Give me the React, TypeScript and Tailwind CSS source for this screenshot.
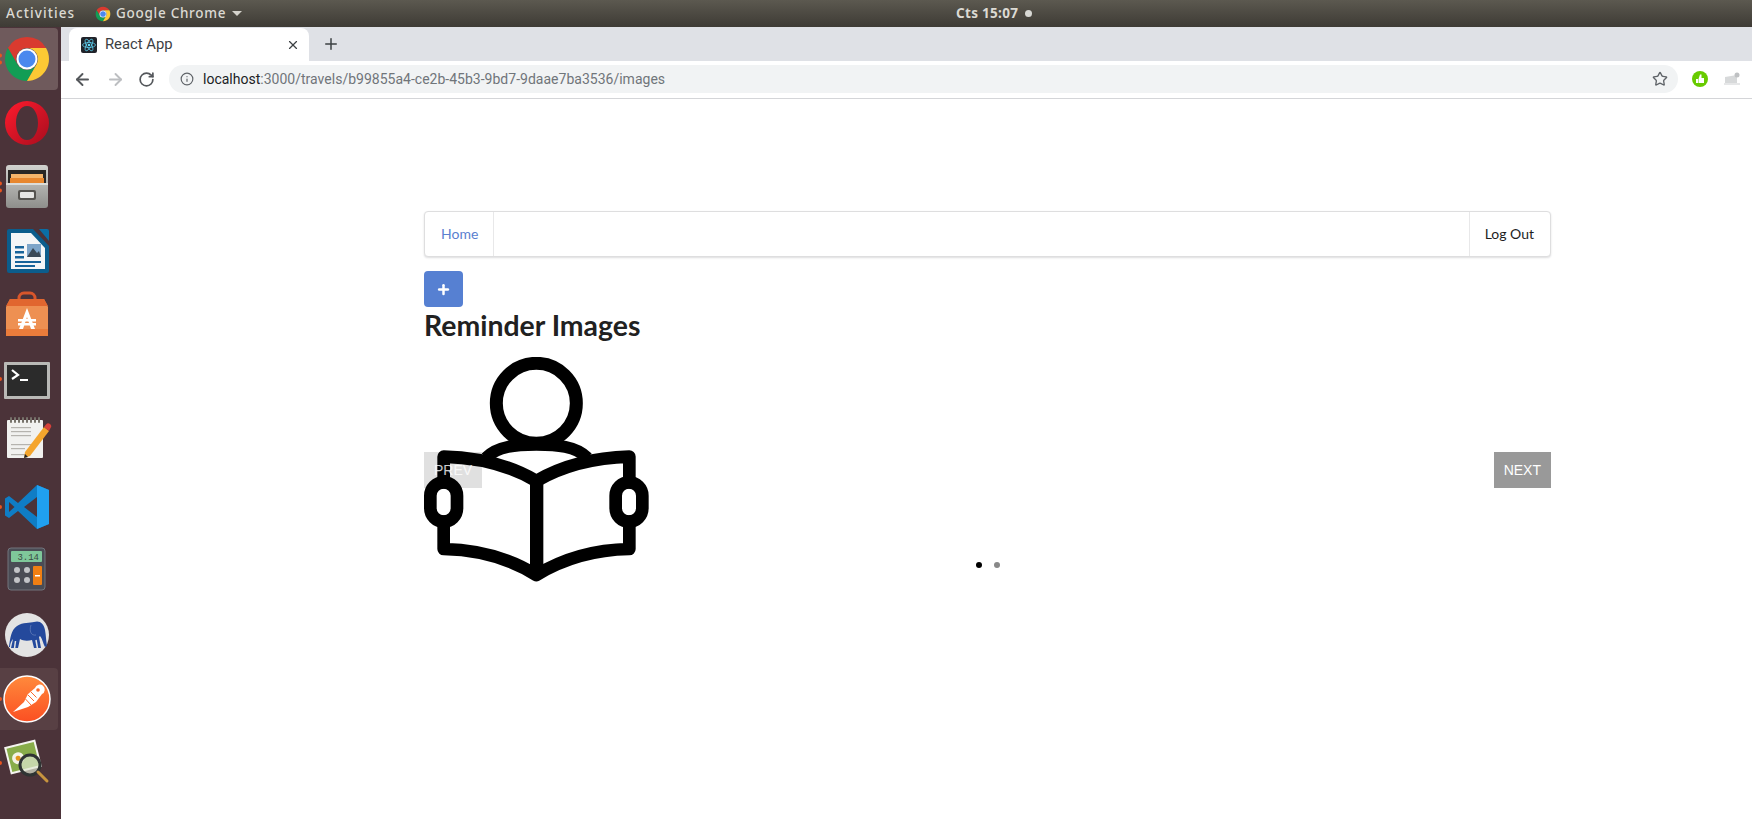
import { ArrowLeft, ArrowRight, RotateCw, Info, Star, X, Plus } from 'lucide-react';
import type { ReactNode } from 'react';

const ChromeIcon = ({ size = 48 }: { size?: number }) => (
  <svg width={size} height={size} viewBox="0 0 48 48">
    <path d="M24 2A22 22 0 0 0 4.95 13L14.5 29.5A11 11 0 0 1 24 13H43.05A22 22 0 0 0 24 2Z" fill="#d93a2f" />
    <path d="M4.95 13A22 22 0 0 0 24 46L33.5 29.5A11 11 0 0 1 14.5 29.5Z" fill="#129d55" />
    <path d="M43.05 13H24A11 11 0 0 1 33.5 29.5L24 46A22 22 0 0 0 43.05 13Z" fill="#fcc934" />
    <circle cx="24" cy="24" r="10.5" fill="#fff" />
    <circle cx="24" cy="24" r="8.5" fill="#4a88ee" />
  </svg>
);

const OperaIcon = () => (
  <svg width="48" height="48" viewBox="0 0 48 48">
    <defs>
      <linearGradient id="operaRed" x1="0" y1="0" x2="1" y2="1">
        <stop offset="0" stopColor="#ff1b2d" />
        <stop offset="1" stopColor="#a70d1e" />
      </linearGradient>
    </defs>
    <path fillRule="evenodd" d="M24 2a22 22 0 1 0 0 44a22 22 0 1 0 0-44ZM24 7c6.500 0 11 7.500 11 17S30.500 41 24 41s-11-7.500-11-17S17.500 7 24 7Z" fill="url(#operaRed)" />
  </svg>
);

const FilesIcon = () => (
  <svg width="48" height="48" viewBox="0 0 48 48">
    <defs>
      <linearGradient id="cabinet" x1="0" y1="0" x2="0" y2="1">
        <stop offset="0" stopColor="#d2d2cf" />
        <stop offset="1" stopColor="#8e8e8b" />
      </linearGradient>
    </defs>
    <rect x="3" y="2" width="42" height="43" rx="3" fill="url(#cabinet)" />
    <rect x="5" y="7" width="38" height="14" fill="#2a2725" />
    <rect x="8" y="11" width="32" height="4" fill="#f5b56b" />
    <rect x="7" y="15" width="34" height="5" fill="#e8872e" />
    <rect x="3" y="20" width="42" height="2" fill="#dcdcd9" />
    <rect x="15" y="27" width="18" height="10" rx="2" fill="#55534f" />
    <rect x="17" y="29" width="14" height="6" rx="1" fill="#e6e6e4" />
  </svg>
);

const WriterIcon = () => (
  <svg width="48" height="48" viewBox="0 0 48 48">
    <path d="M36 2H44a2 2 0 0 1 2 2V14Z" fill="#0a6ea5" />
    <path d="M6 2H30L46 19V44a2 2 0 0 1-2 2H6a2 2 0 0 1-2-2V4a2 2 0 0 1 2-2Z" fill="#0b5d8c" />
    <path d="M8 6H28L42 21V42H8Z" fill="#f4f6f7" />
    <rect x="12" y="19" width="9" height="2.500" fill="#18649a" />
    <rect x="12" y="24" width="9" height="2.500" fill="#18649a" />
    <rect x="12" y="29" width="9" height="2.500" fill="#18649a" />
    <rect x="24" y="17" width="14" height="13" fill="#7da5c9" />
    <path d="M24 30L30 21L34 26L36 24L38 30Z" fill="#3b4a57" />
    <rect x="12" y="34" width="26" height="2" fill="#18649a" />
    <rect x="12" y="38" width="20" height="2" fill="#18649a" />
  </svg>
);

const SoftwareIcon = () => (
  <svg width="48" height="48" viewBox="0 0 48 48">
    <path d="M16 12V7a5 5 0 0 1 5-5h6a5 5 0 0 1 5 5v5" fill="none" stroke="#d8562b" strokeWidth="3" />
    <path d="M7 8H41L45 16V45H3V16Z" fill="#ee9052" />
    <path d="M3 15L7 8H41L45 15Z" fill="#e1662f" />
    <rect x="3" y="38" width="42" height="7" fill="#ea7c3b" />
    <path d="M24 17L32 38H28L24 26L20 38H16Z" fill="#fff" />
    <rect x="15" y="28" width="18" height="2.500" fill="#fff" />
    <rect x="15" y="32" width="18" height="2.500" fill="#fff" />
  </svg>
);

const TerminalIcon = () => (
  <svg width="48" height="48" viewBox="0 0 48 48">
    <rect x="1" y="7" width="46" height="37" rx="1" fill="#b9b9b6" />
    <rect x="4" y="10" width="40" height="31" fill="#2b2b2b" />
    <path d="M9 15L15 20L9 24" fill="none" stroke="#fff" strokeWidth="2.200" />
    <rect x="17" y="24" width="8" height="2" fill="#fff" />
  </svg>
);

const NotepadIcon = () => (
  <svg width="48" height="48" viewBox="0 0 48 48" overflow="visible">
    <g transform="translate(0 -3)">
      <rect x="4" y="4" width="36" height="38" rx="1" fill="#f1f1ef" />
      {[7, 11, 15, 19, 23, 27, 31, 35].map((x) => (
        <rect key={x} x={x} y="1" width="2" height="6" rx="1" fill="#77736b" />
      ))}
      {[11, 15, 19, 28, 32, 38].map((y) => (
        <rect key={y} x="8" y={y} width={y > 30 ? 14 : 20} height="1.200" fill="#b5b3ae" />
      ))}
      <path d="M22 36L41 11L46 15L27 40L21 42Z" fill="#f4a52d" />
      <path d="M41 11L43 8.500A2.500 2.500 0 0 1 47.500 12L46 15Z" fill="#d6413a" />
      <path d="M22 38L21 42L25 41Z" fill="#222" />
    </g>
  </svg>
);

const VscodeIcon = () => (
  <svg width="48" height="48" viewBox="0 0 48 48">
    <path d="M34 2L15 20L6 13L2 15.500V32.500L6 35L15 28L34 46L46 41V7Z" fill="#0f7dc5" />
    <path d="M34 2L46 7V41L34 46Z" fill="#20a0f0" />
    <path d="M34 14L21 24L34 34Z" fill="#4b3339" />
    <path d="M6 19L11.500 24L6 29Z" fill="#4b3339" />
  </svg>
);

const CalcIcon = () => (
  <svg width="48" height="48" viewBox="0 0 48 48">
    <rect x="5" y="1" width="37" height="42" rx="3" fill="#4a4c55" stroke="#72747c" />
    <rect x="8" y="4" width="31" height="11" rx="1" fill="#7fc79a" />
    <text x="36" y="13" textAnchor="end" fontSize="9" fontFamily="Liberation Mono, monospace" fill="#3b4a44">3.14</text>
    <circle cx="14" cy="23" r="3" fill="#c2c3c7" />
    <circle cx="24" cy="23" r="3" fill="#c2c3c7" />
    <circle cx="14" cy="33" r="3" fill="#c2c3c7" />
    <circle cx="24" cy="33" r="3" fill="#c2c3c7" />
    <rect x="30" y="19" width="9" height="19" rx="1" fill="#f07f13" />
    <rect x="32" y="28" width="5" height="1.500" fill="#fff" />
  </svg>
);

const ElephantIcon = () => (
  <svg width="48" height="48" viewBox="0 0 48 48">
    <circle cx="24" cy="24" r="22" fill="#e3e3e3" />
    <path d="M6 36C7 28 8 19 14 15C20 11 27 12 31 11C36 9 41 12 42 19C43 24 43 30 44 35L42 36C40 32 39 27 37 25L36 26L38 37H31L29 29C25 30 20 30 17 28L15 37H8L10 28C8 30 7 33 7 36Z" fill="#24499c" />
    <path d="M11.500 37.500L12.500 30M34.500 37.500L33 29" stroke="#e3e3e3" strokeWidth="1.500" fill="none" />
    <path d="M28 14C26 20 28 25 33 24" stroke="#5f7bb8" strokeWidth="0.800" fill="none" />
  </svg>
);

const PostmanIcon = () => (
  <svg width="50" height="50" viewBox="0 0 50 50">
    <defs>
      <linearGradient id="postmanOrange" x1="0" y1="0" x2="0" y2="1">
        <stop offset="0" stopColor="#ff8a3c" />
        <stop offset="1" stopColor="#fb4f22" />
      </linearGradient>
    </defs>
    <circle cx="25" cy="25" r="23" fill="url(#postmanOrange)" stroke="#fff" strokeWidth="1.500" />
    <path d="M11 38L22 28L26 20L33 14A5 5 0 1 1 40 20L34 28L26 33Z" fill="#fff" />
    <path d="M23.500 25L29 31M26 21L32 27M29 18L34.500 23.500" stroke="#fb6a2d" strokeWidth="1" />
    <circle cx="36" cy="16" r="1.800" fill="#fb6a2d" />
  </svg>
);

const ViewerIcon = () => (
  <svg width="48" height="48" viewBox="0 0 48 48">
    <g transform="rotate(-14 20 18)">
      <rect x="4" y="4" width="32" height="28" fill="#f4f4ef" />
      <rect x="6" y="6" width="28" height="24" fill="#88ad4a" />
      <circle cx="15" cy="18" r="6" fill="#f3f3e6" />
      <circle cx="15" cy="18" r="2.500" fill="#e2941c" />
    </g>
    <circle cx="27" cy="26" r="10" fill="#dfe8d2" fillOpacity="0.700" stroke="#2f3433" strokeWidth="3" />
    <path d="M35 33L44 42" stroke="#c7943e" strokeWidth="3" strokeLinecap="round" />
  </svg>
);

const dockItems: { icon: ReactNode; pips: number; active?: boolean; hover?: boolean }[] = [
  { icon: <ChromeIcon />, pips: 2, active: true },
  { icon: <OperaIcon />, pips: 0 },
  { icon: <FilesIcon />, pips: 2 },
  { icon: <WriterIcon />, pips: 0 },
  { icon: <SoftwareIcon />, pips: 0 },
  { icon: <TerminalIcon />, pips: 1 },
  { icon: <NotepadIcon />, pips: 0 },
  { icon: <VscodeIcon />, pips: 1 },
  { icon: <CalcIcon />, pips: 0 },
  { icon: <ElephantIcon />, pips: 0 },
  { icon: <PostmanIcon />, pips: 1, hover: true },
  { icon: <ViewerIcon />, pips: 1 },
];

const Dock = () => (
  <div className="w-[61px] shrink-0 bg-[#4b3339] flex flex-col">
    {dockItems.map((item, index) => (
      <div key={index} className="h-16 w-[58px] py-px">
        <div
          className={`relative h-full rounded-r flex items-center justify-center pr-1 ${
            item.active ? 'bg-[#6f5a5c]' : item.hover ? 'bg-[#584044]' : ''
          }`}
        >
          {item.icon}
          {item.pips > 0 && (
            <div className="absolute left-0 top-1/2 -translate-y-1/2 flex flex-col gap-[3px]">
              {Array.from({ length: item.pips }).map((_, i) => (
                <span key={i} className="block h-[4px] w-[2px] rounded-r-full bg-[#e9541f]" />
              ))}
            </div>
          )}
        </div>
      </div>
    ))}
  </div>
);

const TopBar = () => (
  <div className="h-[27px] shrink-0 flex items-center bg-gradient-to-b from-[#5c5950] to-[#3e3b35] text-[#dcdad3] text-[13.5px] font-medium font-['Noto_Sans',sans-serif] relative">
    <span className="ml-[6px] w-[89px] tracking-[1.1px]">Activities</span>
    <ChromeIcon size={16} />
    <span className="ml-[5px] tracking-[0.72px]">Google Chrome</span>
    <span className="ml-[6px] w-0 h-0 border-x-[5px] border-x-transparent border-t-[5px] border-t-[#d5d3cc]" />
    <div className="absolute left-[956px] flex items-center gap-[7px] font-bold tracking-[0.3px]">
      <span>Cts 15:07</span>
      <span className="h-[7px] w-[7px] rounded-full bg-[#d8d8d4]" />
    </div>
  </div>
);

const BrowserChrome = () => (
  <div className="shrink-0 font-['Roboto',sans-serif]">
    <div className="h-[34px] bg-[#dfe1e6] flex items-end pl-2">
      <div className="h-[33px] w-[240px] bg-white rounded-t-lg flex items-center pl-3 pr-[9px]">
        <svg width="16" height="16" viewBox="0 0 16 16">
          <rect width="16" height="16" rx="2" fill="#20232a" />
          <circle cx="8" cy="8" r="1.300" fill="#61dafb" />
          <g fill="none" stroke="#61dafb" strokeWidth="0.700">
            <ellipse cx="8" cy="8" rx="6.500" ry="2.500" />
            <ellipse cx="8" cy="8" rx="6.500" ry="2.500" transform="rotate(60 8 8)" />
            <ellipse cx="8" cy="8" rx="6.500" ry="2.500" transform="rotate(120 8 8)" />
          </g>
        </svg>
        <span className="ml-2 text-[14.8px] text-[#3c4043] flex-1">React App</span>
        <X className="w-[14px] h-[14px] text-[#3c4043]" />
      </div>
      <Plus className="w-[18px] h-[18px] ml-[13px] mb-2 text-[#3c4043]" />
    </div>
    <div className="h-[38px] bg-white border-b border-[#d4d5d8] flex items-center pl-3 pb-px">
      <ArrowLeft className="w-[19px] h-[19px] text-[#54575b]" strokeWidth={2.4} />
      <ArrowRight className="w-[19px] h-[19px] ml-[14px] text-[#bcbec1]" strokeWidth={2.4} />
      <RotateCw className="w-[17px] h-[17px] ml-[13px] text-[#54575b]" strokeWidth={2.4} />
      <div className="ml-[14px] w-[1509px] h-7 bg-[#f1f3f4] rounded-full flex items-center pl-[11px] pr-[10px]">
        <Info className="w-[14px] h-[14px] text-[#5f6368]" />
        <span className="ml-[9px] text-sm tracking-[0.01px] text-[#70757a] flex-1">
          <span className="text-[#202124]">localhost</span>:3000/travels/b99855a4-ce2b-45b3-9bd7-9daae7ba3536/images
        </span>
        <Star className="w-4 h-4 text-[#5f6368]" />
      </div>
      <svg className="ml-[14px]" width="16" height="16" viewBox="0 0 16 16">
        <circle cx="8" cy="8" r="8" fill="#68cb00" />
        <path d="M4 8H6V12H4ZM6.500 8L8 3.500H9.500V7H12V12H6.500Z" fill="#fff" />
      </svg>
      <svg className="ml-[16px]" width="16" height="14" viewBox="0 0 16 14">
        <path d="M1 5L13 3V11H1Z" fill="#d7d9da" />
        <rect x="0" y="11" width="16" height="2" fill="#e6e7e8" />
        <circle cx="13" cy="3" r="2.500" fill="#bfc1c3" />
      </svg>
    </div>
  </div>
);

const ReaderIcon = () => (
  <svg width="225" height="225" viewBox="42 20 675 675" className="block relative" fill="none" stroke="#000" strokeLinejoin="round" strokeLinecap="round">
    <circle cx="379" cy="159" r="120" strokeWidth="39" />
    <path d="M228 322C262 287 320 283 379 283C440 283 498 287 532 322" strokeWidth="36" strokeLinecap="butt" />
    <path d="M101 396V319C210 322 300 345 379 392C460 345 550 322 658 319V396" strokeWidth="38" />
    <path d="M101 514V596C210 598 300 625 379 674C460 625 550 598 658 596V514" strokeWidth="38" />
    <path d="M380 392V674" strokeWidth="40" strokeLinecap="butt" />
    <rect x="61" y="396" width="80" height="118" rx="40" strokeWidth="38" />
    <rect x="617" y="396" width="80" height="118" rx="40" strokeWidth="38" />
  </svg>
);

const Carousel = () => (
  <div className="relative mt-[15px] h-[225px] font-['Liberation_Sans',sans-serif] text-sm leading-4">
    {/* disabled prev button sits under the picture, its label shows through on top */}
    <div className="absolute left-0 top-[95px] h-9 w-[58px] bg-[#e0e0e0]" />
    <ReaderIcon />
    <span className="absolute left-[10px] top-[105px] text-white/80">PREV</span>
    <button className="absolute right-0 top-[95px] h-9 px-[10px] bg-[#999] text-white">NEXT</button>
    <div className="absolute left-[552px] top-[205px] flex gap-[12px]">
      <span className="h-[6px] w-[6px] rounded-full bg-black" />
      <span className="h-[6px] w-[6px] rounded-full bg-[#888]" />
    </div>
  </div>
);

const App = () => (
  <div className="h-screen w-full flex flex-col overflow-hidden bg-white">
    <TopBar />
    <div className="flex flex-1 min-h-0">
      <Dock />
      <div className="flex-1 min-w-0 flex flex-col">
        <BrowserChrome />
        <div className="flex-1 pt-[112px] pl-[363px] font-['Lato',sans-serif]">
          <div className="w-[1127px]">
            <nav className="h-[46px] flex justify-between bg-white border border-[#dededf] rounded shadow-[0_1px_2px_0_rgba(34,36,38,0.15)] text-sm">
              <a className="flex items-center pl-4 pr-[15px] border-r border-[#e8e8e9] text-[#5a80cf]">Home</a>
              <a className="flex items-center pl-[15px] pr-4 border-l border-[#e8e8e9] text-[#1d1d1d]">Log Out</a>
            </nav>
            <button className="mt-[14px] w-[39px] h-9 rounded bg-[#5680d2] flex items-center justify-center">
              <Plus className="w-[15px] h-[15px] text-white" strokeWidth={4} />
            </button>
            <h2 className="text-[28.4px] leading-[34px] font-bold text-[#212121] mt-px">Reminder Images</h2>
            <Carousel />
          </div>
        </div>
      </div>
    </div>
  </div>
);

export default App;
